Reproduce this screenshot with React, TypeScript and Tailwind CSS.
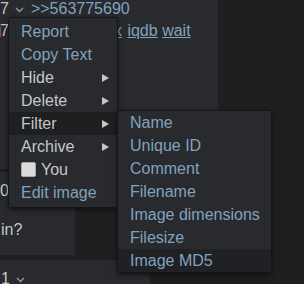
const blue = 'text-[#81a2be]';

function Chevron() {
  return (
    <svg width="9" height="6" viewBox="0 0 9 6" className="inline-block">
      <polyline points="1,1 4.5,4.5 8,1" fill="none" stroke="#8d9aa6" strokeWidth="1.4" />
    </svg>
  );
}

function Arrow() {
  return (
    <svg width="7" height="8" viewBox="0 0 7 8">
      <polygon points="0,0 7,4 0,8" fill="#c5c8c6" />
    </svg>
  );
}

const menuItems = [
  { label: 'Report', link: true },
  { label: 'Copy Text', link: true },
  { label: 'Hide', sub: true },
  { label: 'Delete', sub: true },
  { label: 'Filter', sub: true, active: true },
  { label: 'Archive', sub: true },
  { label: 'You', check: true },
  { label: 'Edit image', link: true },
];

const filterItems = ['Name', 'Unique ID', 'Comment', 'Filename', 'Image dimensions', 'Filesize', 'Image MD5'];

export default function App() {
  return (
    <div className="relative w-[304px] h-[284px] overflow-hidden bg-[#1d1f21] text-[16px] leading-[22px] text-[#c5c8c6] font-['Liberation_Sans',Arial,sans-serif]">
      {/* post 1 */}
      <div className="w-[218px] h-[171px] bg-[#282a2e]">
        <div className="-mt-[2px] flex items-center whitespace-nowrap">
          <span>7</span>
          <span className="ml-[6px] mt-[1px] flex"><Chevron /></span>
          <a className={`ml-[7px] ${blue}`}>&gt;&gt;563775690</a>
        </div>
        <div className={`flex whitespace-nowrap ${blue}`}>
          <span className="relative text-[#c5c8c6]">
            <span className="absolute left-0 top-[7px] w-px h-[10px] bg-[#a8403c]" />
            7
          </span>
          {/* the rest of this line sits under the menu; only the tail of "yandex" shows */}
          <span className="ml-[109px] flex w-[4px] justify-end overflow-hidden">
            <a className="underline">yandex</a>
          </span>
          <a className="ml-[5.5px] underline">iqdb</a>
          <a className="ml-[4.5px] underline">wait</a>
        </div>
      </div>

      {/* post 2 */}
      <div className="mt-[3px] w-[75px] h-[83px] bg-[#282a2e] pt-[7.5px]">
        <div>0</div>
        <div className="mt-[17px] pl-[1px]">in?</div>
      </div>

      {/* post 3 */}
      <div className="mt-[5px] w-[150px] h-[40px] bg-[#282a2e] pt-[8px]">
        <div className="flex items-center">
          <span className="pl-[1px]">1</span>
          <span className="ml-[6px] mt-[1px] flex"><Chevron /></span>
        </div>
      </div>

      {/* context menu */}
      <div className="absolute left-[8px] top-[17px] w-[110px] rounded-[3px] border border-[#141516] bg-[#282a2e] pt-[2px] pb-[3px] shadow-[0_2px_5px_rgba(0,0,0,0.5)]">
        {menuItems.map((it) => (
          <div
            key={it.label}
            className={`flex h-[23px] items-center justify-between pl-[12px] pr-[8px] leading-[23px] ${it.active ? 'bg-[#1d1f21]' : ''}`}
          >
            <span className={`flex items-center ${it.link ? blue : ''}`}>
              {it.check && (
                <span className="mr-[5px] h-[15px] w-[15px] rounded-[2px] border border-[#a9a9a9] bg-[#dcdcdc]" />
              )}
              {it.label}
            </span>
            {it.sub && <Arrow />}
          </div>
        ))}
      </div>

      {/* filter submenu */}
      <div className="absolute left-[117px] top-[110px] w-[155px] rounded-[3px] border border-[#141516] bg-[#282a2e] shadow-[0_2px_5px_rgba(0,0,0,0.5)]">
        {filterItems.map((f, i) => (
          <div
            key={f}
            className={`h-[23px] whitespace-nowrap pl-[12px] leading-[23px] ${blue} ${i === filterItems.length - 1 ? 'bg-[#1f2124]' : ''}`}
          >
            {f}
          </div>
        ))}
      </div>
    </div>
  );
}
